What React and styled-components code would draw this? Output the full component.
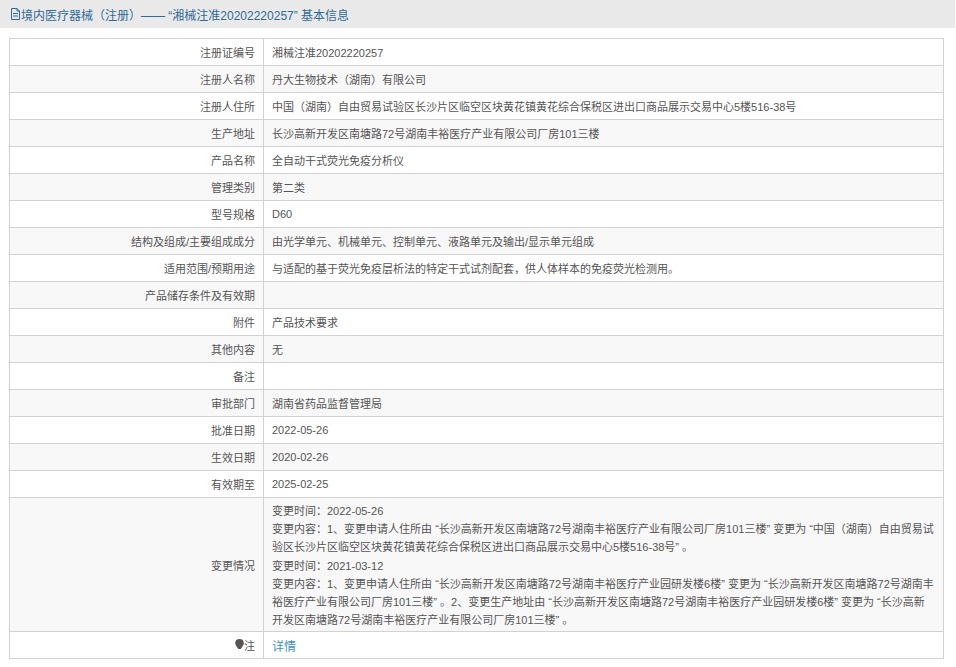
import React from 'react';
import styled, { createGlobalStyle } from 'styled-components';

const Global = createGlobalStyle`
  html, body {
    margin: 0;
    padding: 0;
    background: #fff;
    font-family: "Liberation Sans", "Noto Sans CJK SC", sans-serif;
  }
`;

const Page = styled.div`
  width: 956px;
`;

const Title = styled.div`
  display: flex;
  align-items: center;
  height: 28px;
  margin-right: 1px;
  margin-bottom: 10px;
  padding-left: 10px;
  background: #e9e9e9;
  color: #2f6a9c;
  font-size: 12px;
  white-space: pre;
`;

const Table = styled.table`
  width: 935px;
  margin-left: 9px;
  border-collapse: collapse;
  table-layout: fixed;
  border: 1px solid #d2d2d2;
  font-size: 11px;
  color: #555;
`;

const Row = styled.tr`
  background: ${(p) => (p.$alt ? '#f8f8f8' : '#fff')};
`;

const Label = styled.td`
  width: 245px;
  height: 26px;
  padding: 0 8px 0 0;
  border: 1px solid #d2d2d2;
  text-align: right;
`;

const Value = styled.td`
  height: 26px;
  padding: ${(p) => (p.$long ? '4px 8px 2px' : '0 8px')};
  border: 1px solid #d2d2d2;
  line-height: ${(p) => (p.$long ? '18.2px' : 'normal')};
`;

const DetailLink = styled.a`
  color: #3d8fd8;
  font-size: 12px;
`;

const rows = [
  ['注册证编号', '湘械注准20202220257'],
  ['注册人名称', '丹大生物技术（湖南）有限公司'],
  ['注册人住所', '中国（湖南）自由贸易试验区长沙片区临空区块黄花镇黄花综合保税区进出口商品展示交易中心5楼516-38号'],
  ['生产地址', '长沙高新开发区南塘路72号湖南丰裕医疗产业有限公司厂房101三楼'],
  ['产品名称', '全自动干式荧光免疫分析仪'],
  ['管理类别', '第二类'],
  ['型号规格', 'D60'],
  ['结构及组成/主要组成成分', '由光学单元、机械单元、控制单元、液路单元及输出/显示单元组成'],
  ['适用范围/预期用途', '与适配的基于荧光免疫层析法的特定干式试剂配套，供人体样本的免疫荧光检测用。'],
  ['产品储存条件及有效期', ''],
  ['附件', '产品技术要求'],
  ['其他内容', '无'],
  ['备注', ''],
  ['审批部门', '湖南省药品监督管理局'],
  ['批准日期', '2022-05-26'],
  ['生效日期', '2020-02-26'],
  ['有效期至', '2025-02-25'],
];

const changes = [
  '变更时间：2022-05-26',
  '变更内容：1、变更申请人住所由 “长沙高新开发区南塘路72号湖南丰裕医疗产业有限公司厂房101三楼” 变更为 “中国（湖南）自由贸易试验区长沙片区临空区块黄花镇黄花综合保税区进出口商品展示交易中心5楼516-38号” 。',
  '变更时间：2021-03-12',
  '变更内容：1、变更申请人住所由 “长沙高新开发区南塘路72号湖南丰裕医疗产业园研发楼6楼” 变更为 “长沙高新开发区南塘路72号湖南丰裕医疗产业有限公司厂房101三楼” 。2、变更生产地址由 “长沙高新开发区南塘路72号湖南丰裕医疗产业园研发楼6楼” 变更为 “长沙高新开发区南塘路72号湖南丰裕医疗产业有限公司厂房101三楼” 。',
];

const DocIcon = () => (
  <svg width="11" height="12" viewBox="0 0 11 12" fill="none" stroke="#2f6a9c" strokeWidth="1">
    <path d="M1.5.5h5.5l2.5 2.5v8.5h-8zM7 .5v2.5h2.5M3 5.5h5M3 8h5" />
  </svg>
);

const BulbIcon = () => (
  <svg width="9" height="11" viewBox="0 0 9 11" fill="#555">
    <path d="M4.5 0a4.3 4.3 0 0 1 4.3 4.2c0 2-2 3.400-3 5.800h-2.600c-1-2.400-3-3.800-3-5.800A4.300 4.300 0 0 1 4.500 0z" />
  </svg>
);

export default function App() {
  return (
    <Page>
      <Global />
      <Title>
        <DocIcon />
        境内医疗器械（注册）—— “湘械注准20202220257” 基本信息
      </Title>
      <Table>
        <tbody>
          {rows.map(([label, value], i) => (
            <Row key={label} $alt={i % 2 === 1}>
              <Label>{label}</Label>
              <Value>{value}</Value>
            </Row>
          ))}
          <Row $alt>
            <Label>变更情况</Label>
            <Value $long>
              {changes.map((line) => (
                <div key={line}>{line}</div>
              ))}
            </Value>
          </Row>
          <Row>
            <Label>
              <BulbIcon />注
            </Label>
            <Value>
              <DetailLink>详情</DetailLink>
            </Value>
          </Row>
        </tbody>
      </Table>
    </Page>
  );
}
